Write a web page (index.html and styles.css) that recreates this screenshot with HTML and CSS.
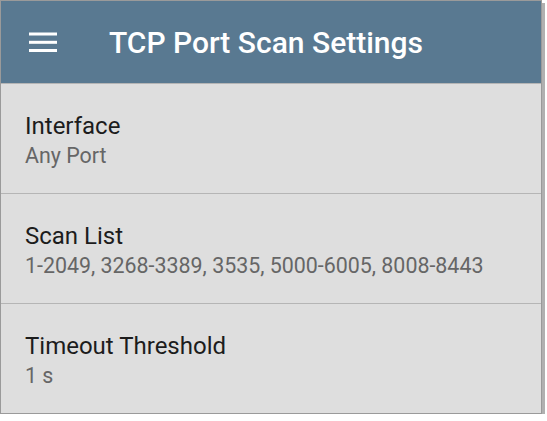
FILE: index.html
```html
<!DOCTYPE html>
<html lang="en">
<head>
    <meta charset="UTF-8">
    <meta name="viewport" content="width=device-width, initial-scale=1.0">
    <title>TCP Port Scan Settings</title>
    <link rel="stylesheet" href="styles.css">
</head>
<body>
    <div class="screen">
        <header class="app-bar">
            <button class="menu-btn" aria-label="Menu">
                <svg width="28" height="20" viewBox="0 0 28 20">
                    <rect x="0" y="0.5" width="28" height="3" fill="#fff"/>
                    <rect x="0" y="8.8" width="28" height="3" fill="#fff"/>
                    <rect x="0" y="17" width="28" height="3" fill="#fff"/>
                </svg>
            </button>
            <h1 class="app-title">TCP Port Scan Settings</h1>
        </header>

        <div class="setting">
            <div class="setting-name">Interface</div>
            <div class="setting-value">Any Port</div>
        </div>
        <div class="setting">
            <div class="setting-name">Scan List</div>
            <div class="setting-value">1-2049, 3268-3389, 3535, 5000-6005, 8008-8443</div>
        </div>
        <div class="setting">
            <div class="setting-name">Timeout Threshold</div>
            <div class="setting-value">1 s</div>
        </div>
    </div>
</body>
</html>
```

FILE: styles.css
```css
body {
    margin: 0;
    background-color: #fff;
    font-family: Roboto, "Noto Sans", sans-serif;
}
.screen {
    width: 540px;
    border: 1px solid #9a9a9a;
    background-color: #dedede;
    box-shadow: 3px 3px 0 #b0b0b0;
}
.app-bar {
    display: flex;
    align-items: center;
    height: 82px;
    background-color: #597991; /* slate blue */
}
.menu-btn {
    display: flex;
    background: none;
    border: none;
    padding: 0;
    margin-left: 28px;
}
.app-title {
    margin: 0 0 0 52px;
    color: #fff;
    font-size: 30px;
    font-weight: 500;
}
.setting {
    display: flex;
    flex-direction: column;
    justify-content: center;
    box-sizing: border-box;
    height: 110px;
    padding: 4px 0 0 24px;
    border-top: 1px solid #b5b5b5;
}
.setting-name {
    font-size: 24px;
    color: #1c1c1c;
    line-height: 30px;
}
.setting-value {
    font-size: 21.4px;
    color: #666;
    line-height: 30px;
}
```
